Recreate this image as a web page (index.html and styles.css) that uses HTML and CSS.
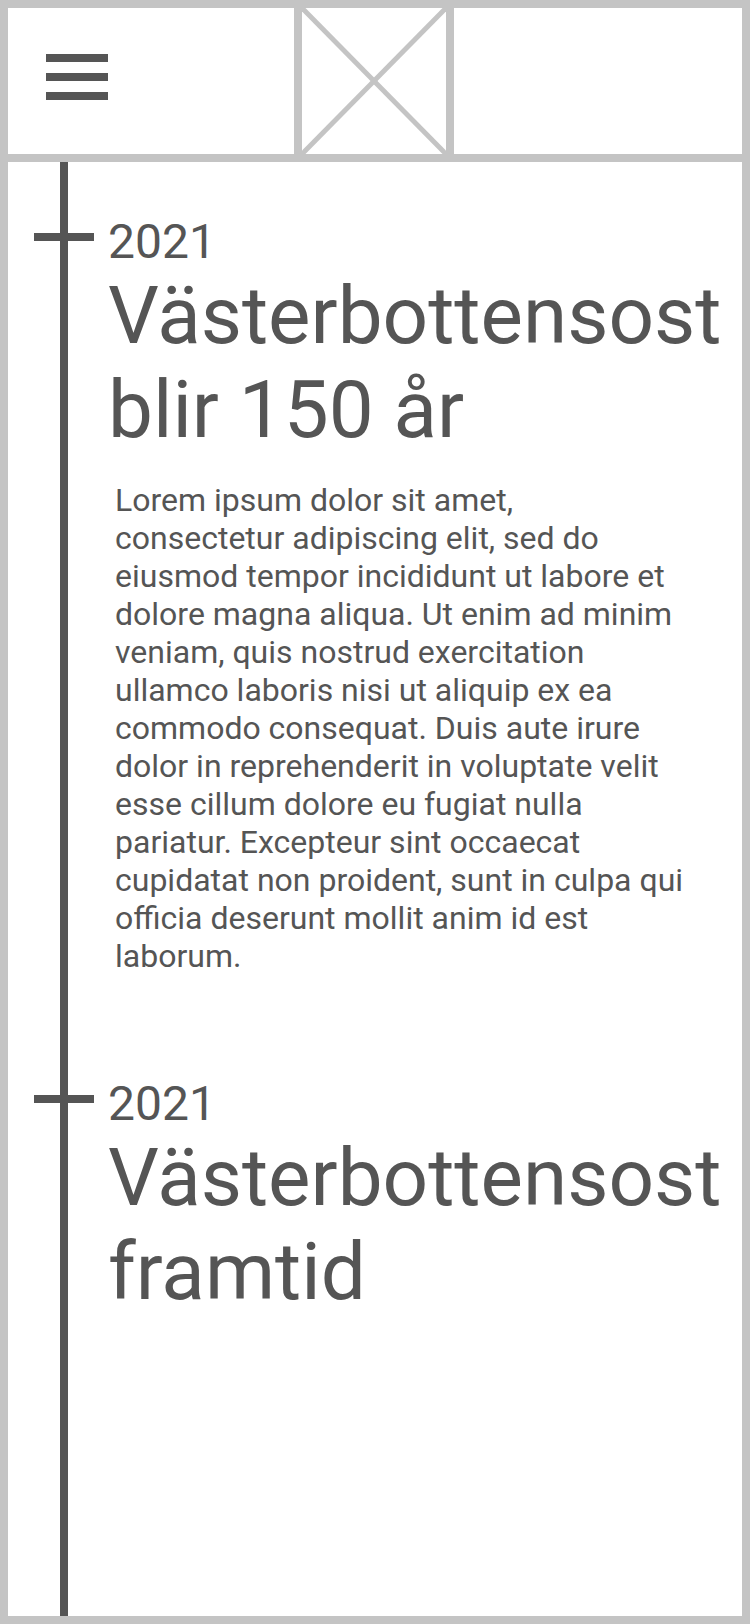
FILE: index.html
```html
<!DOCTYPE html>
<html lang="sv">
<head>
<meta charset="utf-8">
<title>Västerbottensost</title>
<link rel="stylesheet" href="styles.css">
</head>
<body>
<div class="frame">
  <header class="header">
    <div class="hamburger"><span></span><span></span><span></span></div>
    <div class="logo">
      <svg viewBox="0 0 144 146" preserveAspectRatio="none" width="144" height="146">
        <line x1="0" y1="0" x2="144" y2="146" stroke="#c4c4c4" stroke-width="5"/>
        <line x1="144" y1="0" x2="0" y2="146" stroke="#c4c4c4" stroke-width="5"/>
      </svg>
    </div>
  </header>
  <main class="timeline">
    <article class="entry">
      <span class="tick"></span>
      <div class="year">2021</div>
      <h1 class="title">Västerbottensost blir 150 år</h1>
      <p class="text">Lorem ipsum dolor sit amet, consectetur adipiscing elit, sed do eiusmod tempor incididunt ut labore et dolore magna aliqua. Ut enim ad minim veniam, quis nostrud exercitation ullamco laboris nisi ut aliquip ex ea commodo consequat. Duis aute irure dolor in reprehenderit in voluptate velit esse cillum dolore eu fugiat nulla pariatur. Excepteur sint occaecat cupidatat non proident, sunt in culpa qui officia deserunt mollit anim id est laborum.</p>
    </article>
    <article class="entry entry-second">
      <span class="tick"></span>
      <div class="year">2021</div>
      <h1 class="title">Västerbottensost framtid</h1>
    </article>
  </main>
</div>
</body>
</html>
```
FILE: styles.css
```css
* { box-sizing: border-box; }
html, body { margin: 0; padding: 0; background: #fff; }
body { font-family: Roboto, "Noto Sans", Arial, sans-serif; color: #555; }

.frame {
  width: 750px;
  height: 1624px;
  border: 8px solid #c4c4c4;
  display: flex;
  flex-direction: column;
  overflow: hidden;
}

.header {
  height: 154px;
  flex: none;
  display: flex;
  align-items: flex-start;
  border-bottom: 8px solid #c4c4c4;
}

.hamburger {
  margin: 46px 0 0 38px;
  width: 62px;
  display: flex;
  flex-direction: column;
  gap: 11px;
}
.hamburger span {
  display: block;
  height: 8px;
  background: #555;
}

.logo {
  margin-left: 186px;
  width: 160px;
  height: 146px;
  border-left: 8px solid #c4c4c4;
  border-right: 8px solid #c4c4c4;
}
.logo svg { display: block; }

.timeline {
  flex: 1;
  margin-left: 52px;
  border-left: 8px solid #555;
  padding: 53px 0 0 40px;
}

.entry { position: relative; }
.entry-second { margin-top: 102px; }

.tick {
  position: absolute;
  left: -74px;
  top: 18px;
  width: 60px;
  height: 8px;
  background: #555;
}

.year {
  font-size: 48px;
  line-height: 54px;
}

.title {
  margin: 0;
  font-size: 80px;
  font-weight: 400;
  line-height: 94px;
}

.text {
  margin: 24px 0 0 7px;
  width: 571px;
  font-size: 32px;
  line-height: 38px;
}
```
